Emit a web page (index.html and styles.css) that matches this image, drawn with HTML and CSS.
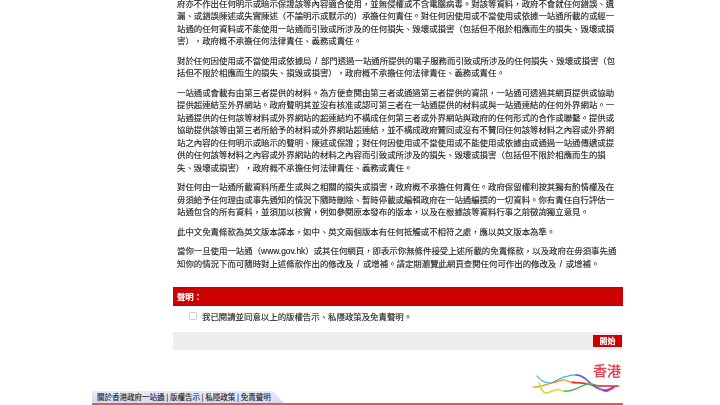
FILE: index.html
```html
<!DOCTYPE html>
<html lang="zh-Hant">
<head>
<meta charset="utf-8">
<title>免責聲明</title>
<link rel="stylesheet" href="styles.css">
</head>
<body>
<div class="page">
  <main class="terms">
    <p>府亦不作出任何明示或暗示保證該等內容適合使用，並無侵權或不含電腦病毒。對該等資料，政府不會就任何錯誤、遺<br>漏、或錯誤陳述或失實陳述（不論明示或默示的）承擔任何責任。對任何因使用或不當使用或依據一站通所載的或經一<br>站通的任何資料或不能使用一站通而引致或所涉及的任何損失、毀壞或損害（包括但不限於相應而生的損失、毀壞或損<br>害），政府概不承擔任何法律責任、義務或責任。</p>
    <p>對於任何因使用或不當使用或依據局 / 部門透過一站通所提供的電子服務而引致或所涉及的任何損失、毀壞或損害（包<br>括但不限於相應而生的損失、損毀或損害），政府概不承擔任何法律責任、義務或責任。</p>
    <p>一站通或會載有由第三者提供的材料。為方便查閱由第三者或通過第三者提供的資訊，一站通可透過其網頁提供或協助<br>提供超連結至外界網站。政府聲明其並沒有核准或認可第三者在一站通提供的材料或與一站通連結的任何外界網站。一<br>站通提供的任何該等材料或外界網站的超連結均不構成任何第三者或外界網站與政府的任何形式的合作或聯繫。提供或<br>協助提供該等由第三者所給予的材料或外界網站超連結，並不構成政府贊同或沒有不贊同任何該等材料之內容或外界網<br>站之內容的任何明示或暗示的聲明、陳述或保證；對任何因使用或不當使用或不能使用或依據由或通過一站通傳遞或提<br>供的任何該等材料之內容或外界網站的材料之內容而引致或所涉及的損失、毀壞或損害（包括但不限於相應而生的損<br>失、毀壞或損害），政府概不承擔任何法律責任、義務或責任。</p>
    <p>對任何由一站通所載資料所產生或與之相關的損失或損害，政府概不承擔任何責任。政府保留權利按其獨有酌情權及在<br>毋須給予任何理由或事先通知的情況下隨時刪除、暫時停載或編輯政府在一站通編撰的一切資料。你有責任自行評估一<br>站通包含的所有資料，並須加以核實，例如參閱原本發布的版本，以及在根據該等資料行事之前徵詢獨立意見。</p>
    <p>此中文免責條款為英文版本譯本，如中、英文兩個版本有任何抵觸或不相符之處，應以英文版本為準。</p>
    <p>當你一旦使用一站通（www.gov.hk）或其任何網頁，即表示你無條件接受上述所載的免責條款，以及政府在毋須事先通<br>知你的情況下而可隨時對上述條款作出的修改及 / 或增補。請定期瀏覽此網頁查閱任何可作出的修改及 / 或增補。</p>
  </main>

  <section class="declare">
    <h2 class="declare-title">聲明：</h2>
    <label class="agree"><span class="box"></span><span>我已閱讀並同意以上的版權告示、私隱政策及免責聲明。</span></label>
    <div class="actions"><span class="start">開始</span></div>
  </section>

  <footer class="footer">
    <nav class="tab">關於香港政府一站通 | 版權告示 | 私隱政策 | 免責聲明</nav>
    <div class="logo">
      <span class="logo-text">香港</span>
      <svg class="ribbon" viewBox="0 0 90 24" width="90" height="24" fill="none" stroke-linecap="round">
        <path d="M5 3C9 8 13 10 18 10C24 9 28 4 36 3C44 1 50 1 56 8C61 13 66 16 74 17" stroke="#27aee0" stroke-width="1.2"/>
        <path d="M44 2C50 2 55 7 60 12C65 16 70 18 76 18" stroke="#9a4cc8" stroke-width="1.4"/>
        <path d="M1 14C8 15 14 11 20 10C26 9 30 6 33 7C37 8 39 11 44 10C49 9 53 10 58 11C64 13 70 13 87 13" stroke="#f5881f" stroke-width="1.2"/>
        <path d="M40 9C46 10 52 10 60 12C68 14 76 13 86 13" stroke="#ec2330" stroke-width="1.3"/>
        <path d="M7 10C9 16 11 21 15 20C20 19 23 15 28 17C33 19 38 19 44 16C50 13 54 10 60 11" stroke="#c6dc14" stroke-width="1.3"/>
        <path d="M32 18C38 19 44 16 50 13C55 10 60 10 66 13" stroke="#2fb670" stroke-width="1.2"/>
        <path d="M72 17.500C76 18 79 16 82 14" stroke="#c030b0" stroke-width="2.2"/>
      </svg>
    </div>
  </footer>
</div>
</body>
</html>
```

FILE: styles.css
```css
html, body {
  margin: 0;
  padding: 0;
  background: #fff;
}

.page {
  width: 720px;
  height: 405px;
  overflow: hidden;
  font-family: "Noto Sans CJK TC", "Liberation Sans", sans-serif;
  color: #1c1c1c;
  -webkit-text-stroke: 0.12px currentColor;
  filter: blur(0.35px);
}

.terms {
  margin: -2.25px 0 0 177px;
  width: 460px;
  font-family: "Liberation Sans", "Noto Sans CJK TC", sans-serif;
  font-size: 8.42px;
  line-height: 12.5px;
  word-spacing: 1.2px;
  white-space: nowrap;
}

.terms p {
  margin: 0 0 7px;
}

.declare {
  margin: 16.75px 97px 0 173px;
}

.declare-title {
  margin: 0;
  height: 18px;
  padding: 0 0 1px 4px;
  background: #cc0000;
  color: #fff;
  font-size: 8.4px;
  font-weight: bold;
  line-height: 18px;
}

.agree {
  display: flex;
  align-items: center;
  gap: 5px;
  height: 20px;
  padding-left: 16px;
  font-size: 8.42px;
}

.box {
  width: 6px;
  height: 6px;
  border: 0.7px solid #ccc;
  border-radius: 1.5px;
  background: #fff;
}

.actions {
  display: flex;
  justify-content: flex-end;
  align-items: center;
  height: 18px;
  margin-top: 6px;
  padding-right: 1px;
  background: #eee;
}

.start {
  width: 29px;
  height: 12px;
  background: #cc0000;
  color: #fff;
  font-size: 8px;
  font-weight: bold;
  line-height: 12px;
  text-align: center;
}

.footer {
  position: relative;
  margin: 41px 97px 0 92px;
  height: 12px;
  border-bottom: 2px solid #e05a5a;
}

.tab {
  box-sizing: border-box;
  width: 192px;
  height: 12px;
  padding-left: 5px;
  background: linear-gradient(#e8ebf8, #d5dbf0);
  clip-path: polygon(0 0, 181px 0, 100% 100%, 0 100%);
  font-size: 7.5px;
  line-height: 12px;
  white-space: nowrap;
}

.logo {
  position: absolute;
  right: 1px;
  bottom: 6px;
  width: 90px;
  height: 34px;
}

.logo-text {
  position: absolute;
  right: 1px;
  top: -3px;
  color: #e8404a;
  font-size: 14px;
  line-height: 20px;
  font-weight: 500;
}

.ribbon {
  position: absolute;
  left: 0;
  bottom: 0;
}
```
